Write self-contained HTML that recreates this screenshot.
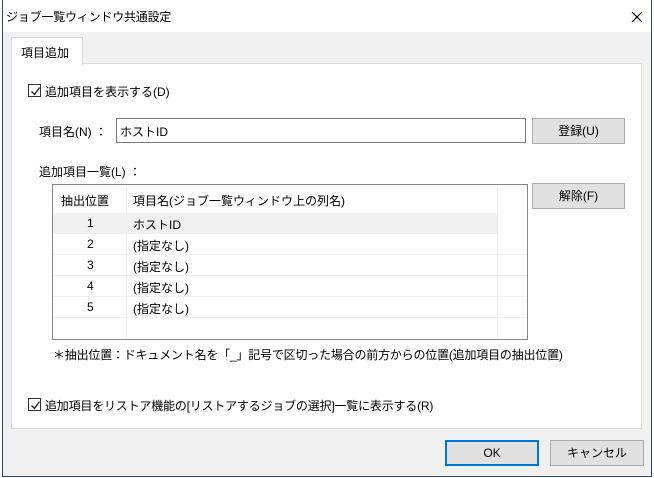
<!DOCTYPE html>
<html><head><meta charset="utf-8"><style>
*{margin:0;padding:0;box-sizing:border-box}
body{width:654px;height:478px;background:#fff;font-family:"Liberation Sans","Noto Sans CJK JP",sans-serif;font-size:12px;color:#000;position:relative;overflow:hidden}
.a{position:absolute;white-space:nowrap}
.win{position:absolute;left:2px;top:0;width:650px;height:477px;border:1px solid #2b4a63;border-top:none;background:#f0f0f0}
.title{position:absolute;left:0;top:0;width:648px;height:32px;background:#fff}
.btn{position:absolute;background:#e1e1e1;border:1px solid #adadad;text-align:center;line-height:24px}
.cb{position:absolute;width:13px;height:13px;border:1px solid #333;background:#fff}
.cb svg{position:absolute;left:1px;top:1px}
.row{position:absolute;left:1px;width:474px;height:21px;border-bottom:1px solid #f0f0f0}
.row span{position:absolute;top:3px}
</style></head><body>
<div class="win">
<div class="title"></div>
<div class="a" style="left:3px;top:8px;letter-spacing:-0.2px">ジョブ一覧ウィンドウ共通設定</div>
<svg class="a" style="left:628px;top:11px" width="12" height="12"><path d="M1 1L11 11M11 1L1 11" stroke="#000" stroke-width="1.2"/></svg>
<div class="a" style="left:8px;top:63px;width:631px;height:366px;background:#fff;border:1px solid #d9d9d9"></div>
<div class="a" style="left:8px;top:37px;width:72px;height:28px;background:#fff;border:1px solid #d9d9d9;border-bottom:none"></div>
<div class="a" style="left:18px;top:44px;">項目追加</div>
<div class="cb" style="left:25px;top:84px"><svg width="11" height="11"><path d="M1.5 5.5L4.5 8.5L9.5 1.5" stroke="#222" stroke-width="1.3" fill="none"/></svg></div>
<div class="a" style="left:42px;top:83px;">追加項目を表示する(D)</div>
<div class="a" style="left:36px;top:123px;">項目名(N) ：</div>
<div class="a" style="left:113px;top:118px;width:410px;height:25px;border:1px solid #7a7a7a;background:#fff;padding:4px 3px">ホストID</div>
<div class="btn" style="left:529px;top:118px;width:93px;height:26px">登録(U)</div>
<div class="a" style="left:36px;top:163px;">追加項目一覧(L) ：</div>
<div class="a" style="left:49px;top:184px;width:476px;height:156px;border:1px solid #828790;background:#fff">
 <div class="a" style="left:73px;top:0;width:1px;height:154px;background:#f0f0f0"></div>
 <div class="a" style="left:444px;top:0;width:1px;height:154px;background:#f0f0f0"></div>
 <div class="a" style="left:8px;top:7px">抽出位置</div>
 <div class="a" style="left:80px;top:7px">項目名(ジョブ一覧ウィンドウ上の列名)</div>
 <div class="row" style="top:28px;background:#f0f0f0;width:444px;left:0"><span style="left:34px">1</span><span style="left:80px">ホストID</span></div>
 <div class="row" style="top:49px;left:0"><span style="left:34px">2</span><span style="left:80px">(指定なし)</span></div>
 <div class="row" style="top:70px;left:0"><span style="left:34px">3</span><span style="left:80px">(指定なし)</span></div>
 <div class="row" style="top:91px;left:0"><span style="left:34px">4</span><span style="left:80px">(指定なし)</span></div>
 <div class="row" style="top:112px;left:0"><span style="left:34px">5</span><span style="left:80px">(指定なし)</span></div>
</div>
<div class="btn" style="left:529px;top:183px;width:93px;height:26px">解除(F)</div>
<div class="a" style="left:50px;top:346px;letter-spacing:-0.2px">＊抽出位置：ドキュメント名を「_」記号で区切った場合の前方からの位置(追加項目の抽出位置)</div>
<div class="cb" style="left:25px;top:398px"><svg width="11" height="11"><path d="M1.5 5.5L4.5 8.5L9.5 1.5" stroke="#222" stroke-width="1.3" fill="none"/></svg></div>
<div class="a" style="left:42px;top:397px;letter-spacing:-0.2px">追加項目をリストア機能の[リストアするジョブの選択]一覧に表示する(R)</div>
<div class="btn" style="left:442px;top:440px;width:94px;height:26px;border:1px solid #0078d7;box-shadow:inset 0 0 0 1px #0078d7">OK</div>
<div class="btn" style="left:547px;top:440px;width:94px;height:26px">キャンセル</div>
</div>
</body></html>
